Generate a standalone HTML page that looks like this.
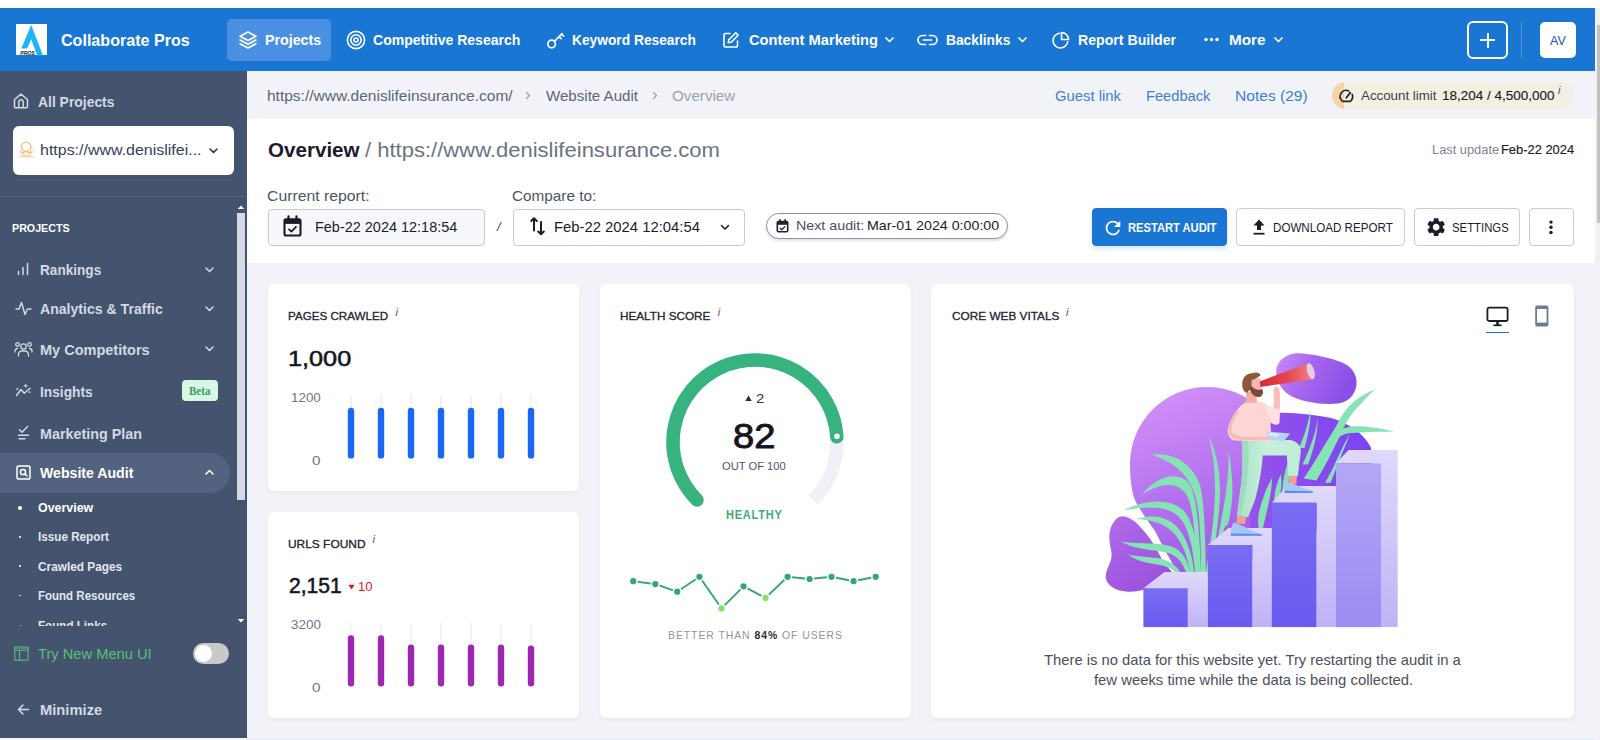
<!DOCTYPE html>
<html lang="en"><head><meta charset="utf-8"><title>Website Audit Overview</title>
<style>
*{box-sizing:border-box;margin:0;padding:0}
html,body{width:1600px;height:740px;overflow:hidden;background:#fff;font-family:"Liberation Sans",sans-serif}
body{position:relative}
.t,.t2{position:absolute;white-space:nowrap;transform-origin:0 50%;display:block}
.a{position:absolute;display:block}
svg{position:absolute;overflow:visible}
.card{position:absolute;background:#fff;border-radius:6px;box-shadow:0 2px 4px rgba(50,60,110,.055)}
.btn{position:absolute;top:208px;height:38px;border-radius:4px;border:1px solid #c6cadc;background:#fff}

</style></head>
<body>
<!-- ===== backgrounds ===== -->
<div class="a" style="left:0;top:8px;width:1595px;height:63px;background:#1976d2"></div>
<div class="a" style="left:247px;top:71px;width:1348px;height:48px;background:#f2f3f8"></div>
<div class="a" style="left:247px;top:119px;width:1348px;height:144px;background:#fff"></div>
<div class="a" style="left:247px;top:263px;width:1348px;height:477px;background:#f2f3f8"></div>
<div class="a" style="left:0;top:71px;width:247px;height:669px;background:#44546f"></div>
<div class="a" style="left:0;top:737.600px;width:1595px;height:2.400px;background:#f6f8fc"></div><div class="a" style="left:247px;top:739px;width:1348px;height:1px;background:#dfe6f3"></div>
<!-- page scrollbar -->
<div class="a" style="left:1595px;top:8px;width:5px;height:732px;background:#f1f2f7"></div>
<div class="a" style="left:1597px;top:25px;width:3px;height:197.500px;background:#c1c1c1"></div>

<!-- ===== top nav ===== -->
<div class="a" style="left:16px;top:24px;width:31px;height:31.400px;background:#fff"></div>
<svg style="left:16px;top:24px" width="31" height="31.400" viewBox="0 0 31 31.400">
  <path d="M15.200 1.100 L27 31.400 L21.200 31.400 L15.200 15.300 L11.100 24.400 L5.300 24.400 Z" fill="#1cb5f5"/>
  <text x="4.200" y="31.100" font-family="Liberation Sans, sans-serif" font-size="5.600" font-weight="700" font-style="italic" fill="#1a1a1a" textLength="14.600" lengthAdjust="spacingAndGlyphs">PROS</text>
</svg>
<div class="a" style="left:227px;top:19px;width:104px;height:42px;border-radius:5px;background:#4a90e2"></div>
<!-- projects (layers) icon -->
<svg style="left:238px;top:30px" width="20" height="20" viewBox="0 0 24 24" fill="none" stroke="#fff" stroke-width="2" stroke-linecap="round" stroke-linejoin="round">
  <path d="M12 2.5 L21.5 7.5 L12 12.5 L2.500 7.5 Z"/><path d="M2.5 12 L12 17 L21.5 12"/><path d="M2.5 16.5 L12 21.500 L21.5 16.5"/>
</svg>
<!-- competitive (target) icon -->
<svg style="left:346px;top:30px" width="20" height="20" viewBox="0 0 20 20" fill="none" stroke="#fff" stroke-width="1.6">
  <circle cx="10" cy="10" r="8.600"/><circle cx="10" cy="10" r="5.2"/><circle cx="10" cy="10" r="2"/>
</svg>
<!-- key icon -->
<svg style="left:546px;top:31px" width="19" height="19" viewBox="0 0 19 19" fill="none" stroke="#fff" stroke-width="1.7" stroke-linecap="round" stroke-linejoin="round">
  <circle cx="5.600" cy="13" r="3.800"/><path d="M8.400 10.300 L16 2.700 M13 5.700 L15 7.700 M15.600 3.100 L17.600 5.100"/>
</svg>
<!-- edit icon -->
<svg style="left:722px;top:31px" width="18" height="18" viewBox="0 0 18 18" fill="none" stroke="#fff" stroke-width="1.6" stroke-linecap="round" stroke-linejoin="round">
  <path d="M8 2.500 H3.500 A1.5 1.5 0 0 0 2 4 V14.500 A1.5 1.5 0 0 0 3.500 16 H14 A1.5 1.500 0 0 0 15.500 14.500 V10"/>
  <path d="M13.800 1.800 L16.200 4.200 L9.200 11.200 L6.300 11.700 L6.800 8.800 Z"/>
</svg>
<svg style="left:885px;top:37px" width="9" height="6" viewBox="0 0 9 6" fill="none" stroke="#fff" stroke-width="1.7" stroke-linecap="round" stroke-linejoin="round"><path d="M1 1 L4.500 4.500 L8 1"/></svg>
<!-- link icon -->
<svg style="left:917px;top:34px" width="21" height="12" viewBox="0 0 21 12" fill="none" stroke="#fff" stroke-width="1.700" stroke-linecap="round" stroke-linejoin="round">
  <path d="M8.5 1.500 H5.500 A4.500 4.500 0 0 0 5.500 10.500 H8.500"/><path d="M12.5 1.500 H15.500 A4.500 4.500 0 0 1 15.500 10.500 H12.500"/><path d="M6.500 6 H14.500"/>
</svg>
<svg style="left:1018px;top:37px" width="9" height="6" viewBox="0 0 9 6" fill="none" stroke="#fff" stroke-width="1.7" stroke-linecap="round" stroke-linejoin="round"><path d="M1 1 L4.500 4.500 L8 1"/></svg>
<!-- pie icon -->
<svg style="left:1051px;top:31px" width="19" height="19" viewBox="0 0 19 19" fill="none" stroke="#fff" stroke-width="1.6" stroke-linecap="round" stroke-linejoin="round">
  <path d="M8.500 2.200 A7.4 7.400 0 1 0 16.800 10.500"/><path d="M10.500 1.500 V8.500 H17.500 A7 7 0 0 0 10.500 1.500 Z"/>
</svg>
<svg style="left:1204px;top:37px" width="15" height="5" viewBox="0 0 15 5" fill="#fff"><circle cx="2" cy="2.500" r="1.700"/><circle cx="7.500" cy="2.500" r="1.700"/><circle cx="13" cy="2.500" r="1.700"/></svg>
<svg style="left:1274px;top:37px" width="9" height="6" viewBox="0 0 9 6" fill="none" stroke="#fff" stroke-width="1.7" stroke-linecap="round" stroke-linejoin="round"><path d="M1 1 L4.500 4.500 L8 1"/></svg>
<div class="a" style="left:1467px;top:21px;width:41px;height:38px;border:2px solid #fff;border-radius:6px"></div>
<div class="a" style="left:1480px;top:39px;width:15px;height:2px;background:#fff"></div>
<div class="a" style="left:1486.500px;top:32.500px;width:2px;height:15px;background:#fff"></div>
<div class="a" style="left:1521px;top:22px;width:1px;height:36px;background:#4f93dd"></div>
<div class="a" style="left:1540px;top:22px;width:36px;height:36px;border-radius:5px;background:#fff"></div>

<!-- ===== breadcrumb row ===== -->
<svg style="left:525px;top:91px" width="6" height="9" viewBox="0 0 6 9" fill="none" stroke="#9aa1ae" stroke-width="1.3" stroke-linecap="round" stroke-linejoin="round"><path d="M1.500 1.500 L4.500 4.500 L1.500 7.500"/></svg>
<svg style="left:652px;top:91px" width="6" height="9" viewBox="0 0 6 9" fill="none" stroke="#9aa1ae" stroke-width="1.3" stroke-linecap="round" stroke-linejoin="round"><path d="M1.500 1.500 L4.500 4.500 L1.500 7.500"/></svg>
<div class="a" style="left:1332px;top:82.300px;width:242px;height:26.800px;border-radius:13.400px;background:#f5efe1;overflow:hidden"><div style="width:12px;height:27px;background:#f6d5a4"></div></div>
<svg style="left:1339px;top:89px" width="15" height="14" viewBox="0 0 15 14" fill="none" stroke="#1f2230" stroke-width="1.600" stroke-linecap="round" stroke-linejoin="round">
  <path d="M9.800 2 A6 6 0 0 0 2.600 11.300 Q3 12.400 4 12.400 H11 Q12 12.400 12.400 11.300 A6 6 0 0 0 13.200 5.300"/><path d="M7.300 8.800 L11.300 3.600" stroke-width="1.800"/>
</svg>

<!-- ===== header controls ===== -->
<div class="a" style="left:268px;top:209px;width:217px;height:36.500px;border:1px solid #c6cadc;border-radius:4px;background:#f6f7fb"></div>
<svg style="left:283px;top:215px" width="19" height="22" viewBox="0 0 19 22" fill="none" stroke="#1b1b29" stroke-width="2.100" stroke-linejoin="round" stroke-linecap="round">
  <rect x="1.500" y="4.200" width="16" height="16.300" rx="1.500"/><path d="M1.500 6.800 H17.500" stroke-width="4.200" stroke-linecap="butt"/><path d="M5.500 1.300 V5 M13.500 1.300 V5" stroke-width="2.200"/><path d="M6 14.300 L8.400 16.700 L13 11.800" stroke-width="1.700"/>
</svg>
<div class="a" style="left:512.500px;top:209px;width:232px;height:36.500px;border:1px solid #c6cadc;border-radius:4px;background:#fff"></div>
<svg style="left:530px;top:216px" width="15" height="20" viewBox="0 0 15 20" fill="none" stroke="#1b1b29" stroke-width="2" stroke-linecap="round" stroke-linejoin="round">
  <path d="M4 14.500 V2.200 M1.200 5 L4 2.200 L6.800 5"/><path d="M11 6 V18.300 M8.200 15.500 L11 18.300 L13.800 15.500"/>
</svg>
<svg style="left:720px;top:224px" width="10" height="7" viewBox="0 0 10 7" fill="none" stroke="#1b1b29" stroke-width="1.600" stroke-linecap="round" stroke-linejoin="round"><path d="M1.500 1.500 L5 5 L8.500 1.500"/></svg>
<div class="a" style="left:766px;top:212.500px;width:242px;height:26.500px;border:1px solid #8d93a3;border-radius:13.500px;background:#fff;box-shadow:0 2px 3px rgba(0,0,0,.12)"></div>
<svg style="left:776px;top:218.500px" width="13" height="14" viewBox="0 0 13 14" fill="none" stroke="#1f2230" stroke-width="1.600" stroke-linejoin="round" stroke-linecap="round">
  <rect x="1.300" y="2.600" width="10.400" height="10.200" rx="1.200"/><path d="M1.300 4.300 H11.700" stroke-width="3" stroke-linecap="butt"/><path d="M3.900 0.900 V3 M9.100 0.900 V3" stroke-width="1.700"/><path d="M4.200 9.200 L5.800 10.700 L8.800 7.600" stroke-width="1.300"/>
</svg>
<div class="btn" style="left:1092px;width:135px;background:#1976d2;border-color:#1976d2;box-shadow:0 3px 5px rgba(25,118,210,.18)"></div>
<svg style="left:1101.500px;top:216.800px" width="22" height="22" viewBox="0 0 24 24" fill="#fff"><path d="M17.650 6.350 A7.950 7.950 0 0 0 12 4 a8 8 0 1 0 7.730 10 h-2.080 A6 6 0 1 1 12 6 c1.660 0 3.140 .69 4.220 1.780 L13 11 h7 V4 z"/></svg>
<div class="btn" style="left:1236px;width:169px"></div>
<svg style="left:1252px;top:219px" width="14" height="16" viewBox="0 0 14 16" fill="#1b1b29"><path d="M7 0.500 L12.500 6.500 H9 V11 H5 V6.500 H1.500 Z"/><rect x="1.500" y="13.800" width="11" height="1.800"/></svg>
<div class="btn" style="left:1414px;width:106px"></div>
<svg style="left:1425.400px;top:216.100px" width="22.300" height="22.300" viewBox="0 0 24 24" fill="#1b1b29"><path d="M19.140 12.940c.04-.3.060-.61.060-.94 0-.32-.02-.64-.07-.94l2.030-1.580a.49.490 0 0 0 .12-.61l-1.920-3.320a.488.488 0 0 0-.59-.22l-2.390.96c-.5-.38-1.030-.7-1.620-.94l-.36-2.540a.484.484 0 0 0-.48-.41h-3.840c-.24 0-.43.170-.47.410l-.36 2.540c-.59.240-1.130.57-1.620.94l-2.390-.96c-.22-.08-.47 0-.59.220L2.740 8.870c-.12.210-.08.470.12.610l2.030 1.580c-.05.300-.09.630-.09.940s.02.640.07.940l-2.030 1.580a.49.490 0 0 0-.12.610l1.920 3.320c.12.220.37.290.59.220l2.390-.96c.5.380 1.030.7 1.620.94l.36 2.540c.05.240.24.410.48.410h3.840c.24 0 .44-.17.470-.41l.36-2.540c.59-.24 1.130-.56 1.620-.94l2.390.96c.22.080.47 0 .59-.22l1.920-3.320c.12-.22.070-.47-.12-.61l-2.010-1.580zM12 15.600c-1.980 0-3.600-1.620-3.600-3.600s1.620-3.600 3.600-3.600 3.600 1.620 3.600 3.600-1.620 3.600-3.600 3.600z"/></svg>
<div class="btn" style="left:1529px;width:45px"></div>
<svg style="left:1549px;top:220px" width="4" height="15" viewBox="0 0 4 15" fill="#1b1b29"><circle cx="2" cy="2.100" r="1.700"/><circle cx="2" cy="7.300" r="1.700"/><circle cx="2" cy="12.500" r="1.700"/></svg>

<!-- ===== cards ===== -->
<div class="card" style="left:268px;top:284px;width:311px;height:206.500px"></div>
<div class="card" style="left:268px;top:511.500px;width:311px;height:206px"></div>
<div class="card" style="left:599.500px;top:284px;width:311px;height:433.500px"></div>
<div class="card" style="left:931px;top:284px;width:643px;height:433.500px"></div>

<!-- pages crawled bars -->
<svg style="left:340px;top:390px" width="200" height="75" viewBox="340 390 200 75">
  <g stroke="#e6e8ef" stroke-width="1"><path d="M351 395V410M381 395V410M411 395V410M441 395V410M471 395V410M501 395V410M531 395V410"/></g>
  <g stroke="#1a66f5" stroke-width="6.400" stroke-linecap="round"><path d="M351 411V455.400M381 411V455.400M411 411V455.400M441 411V455.400M471 411V455.400M501 411V455.400M531 411V455.400"/></g>
</svg>
<!-- urls found bars -->
<svg style="left:340px;top:618px" width="200" height="75" viewBox="340 618 200 75">
  <g stroke="#e6e8ef" stroke-width="1"><path d="M351 623V640M381 623V640M411 623V648M441 623V648M471 623V648M501 623V648M531 623V648"/></g>
  <g stroke="#9c27b0" stroke-width="6.400" stroke-linecap="round"><path d="M351 638.500V683.300M381 638.500V683.300M411 647.700V683.300M441 647.700V683.300M471 647.700V683.300M501 647.700V683.300M531 648.600V683.300"/></g>
</svg>
<svg style="left:348px;top:583.500px" width="7" height="6" viewBox="0 0 7 6" fill="#e0182d"><path d="M0.300 0.800 H6.700 L3.500 5.500 Z"/></svg>

<!-- health gauge -->
<svg style="left:660px;top:348px" width="190" height="170" viewBox="660 348 190 170" fill="none">
  <path d="M697.020 499.980 A82 82 0 1 1 812.980 499.980" stroke="#f0f1f6" stroke-width="13.500"/>
  <path d="M697.020 499.980 A82 82 0 1 1 836.840 436.850" stroke="#36b37e" stroke-width="13.500" stroke-linecap="round"/>
  <circle cx="837" cy="436.200" r="2.800" fill="#fff"/>
  <path d="M745.300 401 H751.700 L748.500 395.500 Z" fill="#2a2d3a"/>
</svg>
<!-- sparkline -->
<svg style="left:625px;top:570px" width="260" height="45" viewBox="625 570 260 45" fill="none">
  <polyline points="633.200,581.200 655.300,584.100 677.200,591.700 699.400,576.800 721.500,608.400 743.600,586.300 765.500,597.900 787.600,576.800 809.600,579 831.500,576.800 853.600,581.200 875.700,576.800" stroke="#2fa874" stroke-width="1.900"/>
  <g fill="#2fa874" stroke="#fff" stroke-width="1.600">
    <circle cx="633.200" cy="581.200" r="3.900"/><circle cx="655.300" cy="584.100" r="3.900"/><circle cx="677.200" cy="591.700" r="3.900"/><circle cx="699.400" cy="576.800" r="3.900"/>
    <circle cx="721.500" cy="608.400" r="3.900" fill="#86e05a"/><circle cx="743.600" cy="586.300" r="3.900"/><circle cx="765.500" cy="597.900" r="3.900" fill="#86e05a"/>
    <circle cx="787.600" cy="576.800" r="3.900"/><circle cx="809.600" cy="579" r="3.900"/><circle cx="831.500" cy="576.800" r="3.900"/><circle cx="853.600" cy="581.200" r="3.900"/><circle cx="875.700" cy="576.800" r="3.900"/>
  </g>
</svg>

<!-- core web vitals icons -->
<svg style="left:1486px;top:305.500px" width="23" height="21" viewBox="0 0 23 21" fill="none" stroke="#1b1b29" stroke-width="1.800" stroke-linejoin="round">
  <rect x="1.400" y="1.600" width="20.200" height="13.400" rx="1.800"/><path d="M11.500 15 V19" stroke-width="2.600"/><path d="M7.400 19.300 H15.600" stroke-width="1.700"/>
</svg>
<div class="a" style="left:1486px;top:331.900px;width:23px;height:1.500px;background:#1976d2"></div>
<svg style="left:1535px;top:305px" width="14" height="22" viewBox="0 0 14 22"><rect x="0.200" y="0.400" width="13.200" height="21.200" rx="2.200" fill="#6d7b92"/><rect x="2" y="4" width="9.600" height="13.600" fill="#fff"/></svg>
<svg style="left:1100px;top:345px" width="310" height="290" viewBox="1100 345 310 290">
  <defs>
    <linearGradient id="gC" x1="0" y1="0" x2="0.350" y2="1"><stop offset="0" stop-color="#d694fb"/><stop offset=".45" stop-color="#bd7bf2"/><stop offset="1" stop-color="#a05be6"/></linearGradient>
    <linearGradient id="gB3" x1="0" y1="0" x2="1" y2="0.300"><stop offset="0" stop-color="#cb8df8"/><stop offset=".45" stop-color="#a867ef"/><stop offset="1" stop-color="#8a4fe8"/></linearGradient>
    <linearGradient id="gB2" x1="0" y1="0" x2="0.600" y2="1"><stop offset="0" stop-color="#b36ce8"/><stop offset="1" stop-color="#9a52de"/></linearGradient>
    <linearGradient id="gH" x1="0" y1="0" x2="1" y2="0"><stop offset="0" stop-color="#9652ea"/><stop offset="1" stop-color="#7a44f2"/></linearGradient>
    <linearGradient id="gF" x1="0" y1="0" x2="0" y2="1"><stop offset="0" stop-color="#7a6cf2"/><stop offset="1" stop-color="#695bee"/></linearGradient>
    <linearGradient id="gF4" x1="0" y1="0" x2="0" y2="1"><stop offset="0" stop-color="#b3a7f7"/><stop offset="1" stop-color="#9a8cf2"/></linearGradient>
    <linearGradient id="gS" x1="0" y1="0" x2="0" y2="1"><stop offset="0" stop-color="#e0d9fc"/><stop offset="1" stop-color="#beb3f6"/></linearGradient>
    <linearGradient id="gT" x1="0" y1="0" x2="1" y2="0"><stop offset="0" stop-color="#d62a36"/><stop offset=".5" stop-color="#e4454e"/><stop offset="1" stop-color="#f28289"/></linearGradient>
    <linearGradient id="gP" x1="0" y1="0" x2="1" y2="0"><stop offset="0" stop-color="#a9e3c7"/><stop offset=".5" stop-color="#c9f0dd"/><stop offset="1" stop-color="#bdecd5"/></linearGradient>
  </defs>
  <!-- blobs -->
  <path d="M1130 464 A77 77 0 0 1 1284 464 C1284 500 1270 540 1240 575 L1180 575 C1176 570 1166.600 554 1155 531 C1147 520 1138 507 1134.500 499 C1131.500 490 1130 478 1130 464 Z" fill="url(#gC)"/>
  <path d="M1122.500 516.300 C1129 516.800 1135 521 1139.800 526.500 C1145 532 1149 537 1152.700 542.700 C1157 549 1160 556 1163.600 562.200 L1172 572 L1146 589 C1138 592 1124 593 1116 589.300 C1107 585 1104.500 579 1106.200 573 C1108 566 1112 561 1111.600 553.600 C1111 547 1108.500 541 1109.500 534 C1110 529 1111.500 525 1113.800 522.200 C1116 518.500 1119 516.200 1122.500 516.300 Z" fill="url(#gB2)"/>
  <path d="M1276.500 368 C1279 358.500 1289 352.800 1299 353.300 C1314 354.500 1330 357.500 1342 362.500 C1352 366.500 1357.500 375 1356.500 385 C1355 395.500 1348 402 1338 403.500 C1322 405 1305 402.500 1292 396.500 C1282 391.500 1274.500 380 1276.500 368 Z" fill="url(#gB3)"/>
  <path d="M1262 414 C1270 412 1300 412 1330 417.800 C1350 423 1366 436 1371 448 L1372 470 L1340 470 L1340 530 L1250 530 L1250 420 Z" fill="url(#gH)"/>
  <!-- plants left -->
  <g fill="#86e3b4">
    <path d="M1150.500 454.500 C1172 452 1192 462 1200 485 C1204 500 1205 530 1206 572 L1201 572 C1201 540 1200 512 1195 495 C1188 472 1170 460 1150.500 454.500 Z"/>
    <path d="M1141.500 495 C1155 478 1176 470 1188 482 C1196 492 1199 520 1201 572 L1196.500 572 C1195 530 1193 505 1186 494 C1176 480 1158 484 1141.500 495 Z"/>
    <path d="M1208.500 436 C1218 455 1222 480 1219 510 C1217 535 1213 555 1211 572 L1206 572 C1209 550 1213 530 1214.500 505 C1216 480 1214 455 1208.500 436 Z"/>
    <path d="M1228.500 452 C1233 470 1232 490 1228 510 C1224 530 1219 550 1217 572 L1213 572 C1215 550 1220 528 1223.500 508 C1227 488 1229 470 1228.500 452 Z"/>
    <path d="M1123.500 510.500 C1145 499 1170 498 1183 510 C1194 522 1198 545 1199 572 L1195 572 C1193 548 1189 528 1179 517 C1167 505 1146 506 1123.500 510.500 Z"/>
    <path d="M1135.500 519 C1155 513 1173 517 1183 535 C1190 548 1193 560 1194 572 L1190 572 C1188 560 1185 550 1179 540 C1170 525 1155 520 1135.500 519 Z"/>
    <path d="M1120.500 541.500 C1140 545 1160 541 1175 548 C1184 553 1188 562 1190 572 L1186 572 C1183 564 1179 558 1172 554.500 C1160 549 1140 552 1120.500 541.500 Z"/>
    <path d="M1128 554.500 C1142 558 1157 556 1168 561 C1174 564 1178 568 1180 572 L1175 572 C1171 568 1166 566 1160 565 C1148 563 1138 562 1128 554.500 Z"/>
    <path d="M1231 470 C1234 490 1232 508 1228 524 L1224 528 C1228 510 1231 490 1231 470 Z"/>
    <path d="M1259 512 C1262 500 1266 488 1272 478 C1272 492 1268 506 1263 528 L1258.500 528 C1258 522 1258 517 1259 512 Z"/>
    <path d="M1274 500 C1275 490 1277 482 1281 474 C1282 484 1281 492 1279 500 Z"/>
    <path d="M1282 492 C1283 480 1285 470 1288 462 L1289 480 C1288 486 1286 490 1285 494 Z"/>
  </g>
  <!-- plants right -->
  <g fill="#86e3b4">
    <path d="M1375 389.300 C1369 392 1364 394.500 1359.800 397.300 C1353 402 1348 407 1344.700 411.400 C1341 416.500 1338.500 421.500 1336 426.500 L1325.200 443.900 L1312.200 465.500 L1303.600 478.500 L1316.500 480.600 L1327.400 461.200 L1340.300 435.200 C1343 429 1345.500 424 1347.900 420 C1352 413 1357 407.500 1362 402.700 C1366 398 1370 394 1375 389.300 Z"/>
    <path d="M1394.400 431.500 C1386 429.500 1378 428 1370.600 427.200 C1363 426.200 1357 426 1351.200 426.500 C1346 427.300 1342 428.800 1338.200 430.900 L1331 442 L1331.700 446 C1334 442.500 1336 439.500 1338.200 437.400 C1342 434.800 1346 433.500 1351.200 433 C1357 432.500 1363 432.300 1370.600 432 C1378 431.800 1386 431.700 1394.400 431.500 Z"/>
    <path d="M1350 434 C1344 444 1338 456 1333 468 L1325 482.800 L1330.600 482.800 C1334 474 1338 464 1342 454 C1345 446 1348 440 1350 434 Z"/>
    <path d="M1310.500 409.200 C1311 420 1309 432 1304.600 448 L1299 448 C1305 434 1309 421 1310.500 409.200 Z"/>
    <path d="M1317.600 418.300 C1318 432 1314 449 1308 464.400 L1302.500 464.400 C1310 449 1316 433 1317.600 418.300 Z"/>
  </g>
  <!-- bars -->
  <g>
    <path d="M1143.400 588.200 L1164.600 572 L1207.900 572 L1207.900 627.100 L1187.800 627.100 L1187.800 588.200 Z" fill="url(#gS)"/>
    <rect x="1143.400" y="588.200" width="44.400" height="38.900" fill="url(#gF)"/>
    <path d="M1207.900 545 L1228.500 528 L1272.200 528 L1272.200 627.100 L1252.300 627.100 L1252.300 545 Z" fill="url(#gS)"/>
    <rect x="1207.900" y="545" width="44.400" height="82.100" fill="url(#gF)"/>
    <path d="M1271.800 502.700 L1287 486 L1336 486 L1336 627.100 L1316.500 627.100 L1316.500 502.700 Z" fill="url(#gS)"/>
    <rect x="1271.800" y="502.700" width="44.700" height="124.400" fill="url(#gF)"/>
    <path d="M1336 463.300 L1348.500 450 L1397.700 450 L1397.700 627.100 L1381 627.100 L1381 463.300 Z" fill="url(#gS)"/>
    <rect x="1336" y="463.300" width="45" height="163.800" fill="url(#gF4)"/>
  </g>
  <!-- person -->
  <g>
    <!-- pants -->
    <path d="M1241.800 440 L1290 440 C1297 441 1301.500 446 1300.800 452 L1297.700 476.600 L1288.400 476.600 L1286.800 455.600 L1262.700 455.600 C1262 470 1258 490 1255 500 L1248 517 L1237 516.200 C1239 500 1242 480 1242.500 468.800 Z" fill="url(#gP)"/>
    <path d="M1241.800 440 L1248 440 C1250 460 1247 485 1244 500 L1241 516.500 L1237 516.200 C1239 500 1242 480 1242.500 468.800 Z" fill="#9fdcbf"/>
    <!-- ankles -->
    <path d="M1289 476.600 L1296.900 476.600 L1296.300 484 L1289.500 484 Z" fill="#f5a08e"/>
    <path d="M1237 516.200 L1246 517 L1245 524 L1236.500 523.500 Z" fill="#f5a08e"/>
    <!-- shoes -->
    <path d="M1286.500 482 C1291 482.500 1297 485.500 1304 488.500 C1310 490 1313 491 1313.200 493 L1284.500 493 C1284 489 1284.700 485 1286.500 482 Z" fill="#a9c7f4"/>
    <path d="M1284.500 490.800 L1312.500 491.300 L1313.200 493 L1284.500 493 Z" fill="#5b8def"/>
    <path d="M1233.500 522.400 C1238 523.500 1246 527 1253 531 C1258 533 1262 534 1262 535.700 L1230.900 535.700 C1230.500 531 1231.200 526 1233.500 522.400 Z" fill="#a9c7f4"/>
    <path d="M1230.900 533.500 L1261 534 L1262 535.700 L1230.900 535.700 Z" fill="#5b8def"/>
    <!-- torso -->
    <path d="M1245.700 402.300 C1238 406 1231 418 1228 428 C1227 434 1229 438.500 1234 440.500 L1272 441.500 L1270.500 425 C1272 418 1268.500 408 1266 403.600 C1260 401 1252 400.500 1245.700 402.300 Z" fill="#fcd6d6"/>
    <path d="M1237 412 C1231.500 420 1229 428 1230.500 433 C1233 438 1240 438.800 1250 438.500 L1271 438.300" fill="none" stroke="#f8bab3" stroke-width="3" stroke-linecap="round"/>
    <!-- sleeve + forearm -->
    <path d="M1264 404 L1273.500 407.500 L1280 409.500 L1279.500 423 C1277 426 1273 425 1270.500 422 C1269 416 1267 410 1264 404 Z" fill="#fde1e1"/>
    <path d="M1273.600 408 L1280 409.600 L1280 392 C1279.500 388 1277.500 386.300 1275.500 386.800 C1273.500 387.500 1273.300 390 1273.800 393 Z" fill="#fbbdbd"/>
    <!-- laptop -->
    <path d="M1266 431.400 L1290.300 433.400 L1283.500 441.500 L1270 439.500 Z" fill="#b5d3f5"/>
    <path d="M1268 432.500 L1280 434 L1277 437 L1270.500 436 Z" fill="#e1ecfb"/>
    <!-- neck, face -->
    <path d="M1246.400 392 L1256.500 392 L1256.800 402.800 L1245.800 402.800 Z" fill="#f6aaa0"/>
    <path d="M1251.500 379 L1260.500 378.300 L1261.200 388.500 L1256 391.500 L1251.500 389.500 Z" fill="#f9b4b4"/>
    <!-- hair, beard -->
    <path d="M1242.300 386 C1241.500 378 1246 373 1252.400 373.200 C1256 371.800 1260 372.800 1260.500 375.300 C1258 378 1254 379.500 1251.800 380 L1251.500 388 L1247 393 C1244 392 1242.800 389.500 1242.300 386 Z" fill="#8b5a3c"/>
    <path d="M1249.200 386.800 L1252 386.500 C1254 389.500 1258 390.500 1262 389 C1264 392 1263 396 1259.500 397 C1254 397.500 1250 393 1249.200 386.800 Z" fill="#7a4a30"/>
    <!-- telescope -->
    <path d="M1259.900 381.400 L1308.500 363.100 C1311 364 1314 375 1313.200 379.300 L1260.500 386.900 Z" fill="url(#gT)"/>
    <ellipse cx="1310.800" cy="371.200" rx="3.500" ry="8.300" transform="rotate(-16 1310.800 371.200)" fill="#e9cde0"/>
  </g>
</svg>


<!-- ===== sidebar ===== -->
<svg style="left:13px;top:93px" width="16" height="16" viewBox="0 0 16 16" fill="none" stroke="#d3d8e2" stroke-width="1.500" stroke-linejoin="round" stroke-linecap="round">
  <path d="M1.500 6.500 L8 1.200 L14.500 6.500 V13.500 A1.200 1.200 0 0 1 13.300 14.700 H2.700 A1.200 1.200 0 0 1 1.500 13.500 Z"/><path d="M5.800 14.500 V9 A2.200 2.200 0 0 1 10.200 9 V14.500"/>
</svg>
<div class="a" style="left:13px;top:126px;width:221px;height:48.500px;border-radius:6px;background:#fff"></div>
<svg style="left:18px;top:141px" width="16" height="18" viewBox="18 141 16 18" fill="none" stroke="#f2bf78" stroke-width="1.400" stroke-linecap="round">
  <circle cx="26.200" cy="146.800" r="4.700"/>
  <path d="M20.500 151.200 C21 153.200 23.500 153.600 24.600 152 M31.900 151.200 C31.400 153.200 28.900 153.600 27.800 152" stroke-width="1.500"/>
  <path d="M19 156.800 H33 M21.500 155.300 H30.500" stroke="#f6d3a0" stroke-width="1.300"/>
</svg>
<svg style="left:209px;top:147.500px" width="9" height="6" viewBox="0 0 9 6" fill="none" stroke="#2a2d3a" stroke-width="1.500" stroke-linecap="round" stroke-linejoin="round"><path d="M1 1 L4.500 4.500 L8 1"/></svg>
<div class="a" style="left:16px;top:179.500px;width:215px;height:0;border-top:1px dotted #53627d"></div>
<div class="a" style="left:0;top:196px;width:247px;height:1px;background:#56657f"></div>
<!-- sidebar scrollbar -->
<div class="a" style="left:237px;top:212.500px;width:8px;height:287.500px;background:#d6d8e6"></div>
<svg style="left:237px;top:205px" width="8" height="4" viewBox="0 0 8 4" fill="#fff"><path d="M0.800 4 L4 0.500 L7.200 4 Z"/></svg>
<svg style="left:237px;top:619px" width="8" height="4" viewBox="0 0 8 4" fill="#fff"><path d="M0.800 0 L4 3.500 L7.200 0 Z"/></svg>

<!-- menu icons -->
<svg style="left:17px;top:262px" width="13" height="14" viewBox="0 0 13 14" fill="none" stroke="#d3d8e2" stroke-width="1.500" stroke-linecap="round"><path d="M1.500 12.500 V9.500 M6 12.500 V5.500 M10.500 12.500 V1.500"/></svg>
<svg style="left:15px;top:301px" width="17" height="15" viewBox="0 0 17 15" fill="none" stroke="#d3d8e2" stroke-width="1.500" stroke-linecap="round" stroke-linejoin="round"><path d="M1 8 H4 L6.500 1.500 L10 13.500 L12.500 8 H16"/></svg>
<svg style="left:14px;top:341px" width="19" height="16" viewBox="0 0 19 16" fill="none" stroke="#d3d8e2" stroke-width="1.300" stroke-linecap="round" stroke-linejoin="round">
  <circle cx="9.500" cy="5.500" r="2.700"/><path d="M4.500 15 V13.500 A3.500 3.500 0 0 1 8 10 H11 A3.500 3.500 0 0 1 14.500 13.500 V15"/>
  <circle cx="3.500" cy="3.500" r="1.800"/><circle cx="15.500" cy="3.500" r="1.800"/><path d="M1 11 V10 A2.500 2.500 0 0 1 3.500 7.500 M18 11 V10 A2.500 2.500 0 0 0 15.500 7.500"/>
</svg>
<svg style="left:15px;top:383px" width="17" height="15" viewBox="0 0 17 15" fill="none" stroke="#d3d8e2" stroke-width="1.500" stroke-linecap="round" stroke-linejoin="round"><path d="M1.500 12.500 L6 6.500 L9.300 10.200 L15 5.300"/><path d="M10.700 1.300 V4.300 M9.200 2.800 H12.200" stroke-width="1.100"/><path d="M2.300 5.300 V6.700 M1.600 6 H3 M14.500 8.600 V9.800 M13.900 9.200 H15.100" stroke-width="0.900"/></svg>
<svg style="left:17px;top:425px" width="14" height="16" viewBox="0 0 14 16" fill="none" stroke="#d3d8e2" stroke-width="1.500" stroke-linecap="round" stroke-linejoin="round"><path d="M2.500 4.800 L5 7.300 L10.500 1.500"/><path d="M1.500 10.300 H11.500 M2 13.700 H8"/></svg>
<div class="a" style="left:0;top:452.500px;width:230px;height:40px;border-radius:0 20px 20px 0;background:#53637f"></div>
<svg style="left:16px;top:465px" width="15" height="15" viewBox="0 0 15 15" fill="none" stroke="#fff" stroke-width="1.500" stroke-linecap="round" stroke-linejoin="round"><rect x="1" y="1" width="13" height="13" rx="1.800"/><circle cx="7" cy="7" r="2.600"/><path d="M9 9 L11 11"/></svg>
<svg style="left:204.500px;top:266.500px" width="9" height="6" viewBox="0 0 9 6" fill="none" stroke="#d3d8e2" stroke-width="1.500" stroke-linecap="round" stroke-linejoin="round"><path d="M1 1 L4.500 4.500 L8 1"/></svg>
<svg style="left:204.500px;top:305.500px" width="9" height="6" viewBox="0 0 9 6" fill="none" stroke="#d3d8e2" stroke-width="1.500" stroke-linecap="round" stroke-linejoin="round"><path d="M1 1 L4.500 4.500 L8 1"/></svg>
<svg style="left:204.500px;top:346px" width="9" height="6" viewBox="0 0 9 6" fill="none" stroke="#d3d8e2" stroke-width="1.500" stroke-linecap="round" stroke-linejoin="round"><path d="M1 1 L4.500 4.500 L8 1"/></svg>
<svg style="left:204.500px;top:469px" width="9" height="6" viewBox="0 0 9 6" fill="none" stroke="#fff" stroke-width="1.600" stroke-linecap="round" stroke-linejoin="round"><path d="M1 5 L4.500 1.500 L8 5"/></svg>
<div class="a" style="left:182px;top:380px;width:36px;height:21px;border-radius:4px;background:#d9f6e5"></div>
<!-- submenu bullets -->
<div class="a" style="left:18px;top:506px;width:4px;height:4px;border-radius:2px;background:#fff"></div>
<div class="a" style="left:19.300px;top:535.900px;width:1.700px;height:1.700px;background:#d5dae4"></div>
<div class="a" style="left:19.300px;top:565.300px;width:1.700px;height:1.700px;background:#d5dae4"></div>
<div class="a" style="left:19.300px;top:594.700px;width:1.700px;height:1.700px;background:#d5dae4"></div>
<div class="a" style="left:0;top:615px;width:236px;height:11px;overflow:hidden">
  <span class="t2" style="left:38.300px;top:2px;font-size:12.500px;line-height:18px;font-weight:700;color:#e3e6ee;transform:scaleX(.93)">Found Links</span>
  <div class="a" style="left:19.500px;top:10px;width:1.500px;height:1.500px;background:#c5cbd8"></div>
</div>
<!-- try new menu -->
<svg style="left:14px;top:646px" width="15" height="15" viewBox="0 0 15 15" fill="none" stroke="#58bf78" stroke-width="1.100" stroke-linejoin="miter"><rect x="0.800" y="1" width="13.200" height="13.200"/><path d="M0.800 4.200 H14 M5.600 4.200 V14.200"/><path d="M0.800 2.400 H14" stroke-width="0.800" opacity=".8"/></svg>
<div class="a" style="left:192.500px;top:642.500px;width:36.500px;height:21px;border-radius:10.500px;background:#c9c9c9"></div>
<div class="a" style="left:194.500px;top:644.500px;width:17px;height:17px;border-radius:8.500px;background:#fff"></div>
<svg style="left:17px;top:703px" width="13" height="13" viewBox="0 0 13 13" fill="none" stroke="#d3d8e2" stroke-width="1.500" stroke-linecap="round" stroke-linejoin="round"><path d="M11.500 6.500 H1.500 M6 2 L1.500 6.500 L6 11"/></svg>

<span class="t" style="left:60.70px;top:28.8px;font-size:17px;line-height:24px;font-weight:700;color:#ffffff;transform:scaleX(0.9458);">Collaborate Pros</span>
<span class="t" style="left:265.41px;top:30.2px;font-size:14.5px;line-height:20px;font-weight:700;color:#ffffff;transform:scaleX(0.9798);">Projects</span>
<span class="t" style="left:373.46px;top:30.2px;font-size:14.5px;line-height:20px;font-weight:700;color:#ffffff;transform:scaleX(0.9672);">Competitive Research</span>
<span class="t" style="left:572.34px;top:30.2px;font-size:14.5px;line-height:20px;font-weight:700;color:#ffffff;transform:scaleX(0.9492);">Keyword Research</span>
<span class="t" style="left:748.54px;top:30.2px;font-size:14.5px;line-height:20px;font-weight:700;color:#ffffff;transform:scaleX(1.0127);">Content Marketing</span>
<span class="t" style="left:945.54px;top:30.2px;font-size:14.5px;line-height:20px;font-weight:700;color:#ffffff;transform:scaleX(0.9500);">Backlinks</span>
<span class="t" style="left:1078.12px;top:30.2px;font-size:14.5px;line-height:20px;font-weight:700;color:#ffffff;transform:scaleX(0.9740);">Report Builder</span>
<span class="t" style="left:1228.65px;top:30.2px;font-size:14.5px;line-height:20px;font-weight:700;color:#ffffff;transform:scaleX(1.0517);">More</span>
<span class="t" style="left:1550.30px;top:31.6px;font-size:12.5px;line-height:18px;font-weight:400;color:#1b55b0;transform:scaleX(0.9994);">AV</span>
<span class="t" style="left:266.93px;top:85.0px;font-size:15px;line-height:21px;font-weight:400;color:#5b6577;transform:scaleX(1.0337);">https://www.denislifeinsurance.com/</span>
<span class="t" style="left:546.40px;top:85.0px;font-size:15px;line-height:21px;font-weight:400;color:#5b6577;transform:scaleX(1.0063);">Website Audit</span>
<span class="t" style="left:671.79px;top:85.0px;font-size:15px;line-height:21px;font-weight:400;color:#9aa1ae;transform:scaleX(1.0114);">Overview</span>
<span class="t" style="left:1055.11px;top:85.0px;font-size:15px;line-height:21px;font-weight:400;color:#3d7fd6;transform:scaleX(0.9875);">Guest link</span>
<span class="t" style="left:1145.96px;top:85.0px;font-size:15px;line-height:21px;font-weight:400;color:#3d7fd6;transform:scaleX(0.9763);">Feedback</span>
<span class="t" style="left:1234.78px;top:85.0px;font-size:15px;line-height:21px;font-weight:400;color:#3d7fd6;transform:scaleX(1.0385);">Notes (29)</span>
<span class="t" style="left:1361.20px;top:86.8px;font-size:12.5px;line-height:18px;font-weight:400;color:#3a3f4c;transform:scaleX(1.0652);">Account limit</span>
<span class="t" style="left:1442.36px;top:86.8px;font-size:13px;line-height:18px;font-weight:400;color:#1b1b29;transform:scaleX(1.0373);-webkit-text-stroke:0.15px #1b1b29;">18,204 / 4,500,000</span>
<span class="t" style="left:1558.00px;top:83.0px;font-size:11px;line-height:15px;font-weight:400;color:#4a5060;transform:scaleX(1.0000);font-style:italic;">i</span>
<span class="t" style="left:267.56px;top:135.3px;font-size:21px;line-height:29px;font-weight:700;color:#1b1b29;transform:scaleX(0.9805);">Overview</span>
<span class="t" style="left:365.40px;top:135.3px;font-size:21px;line-height:29px;font-weight:400;color:#6a7384;transform:scaleX(1.0486);">/ https://www.denislifeinsurance.com</span>
<span class="t" style="left:1431.87px;top:141.0px;font-size:12.5px;line-height:18px;font-weight:400;color:#7a8496;transform:scaleX(1.0270);">Last update</span>
<span class="t" style="left:1500.87px;top:141.0px;font-size:12.5px;line-height:18px;font-weight:400;color:#1b1b29;transform:scaleX(1.0311);-webkit-text-stroke:0.15px #1b1b29;">Feb-22 2024</span>
<span class="t" style="left:267.46px;top:185.4px;font-size:15px;line-height:21px;font-weight:400;color:#4c5567;transform:scaleX(1.0515);">Current report:</span>
<span class="t" style="left:511.98px;top:185.4px;font-size:15px;line-height:21px;font-weight:400;color:#4c5567;transform:scaleX(1.0201);">Compare to:</span>
<span class="t" style="left:315.27px;top:215.7px;font-size:15px;line-height:21px;font-weight:400;color:#1b1b29;transform:scaleX(0.9639);">Feb-22 2024 12:18:54</span>
<span class="t" style="left:497.00px;top:218.0px;font-size:13px;line-height:18px;font-weight:400;color:#3a3f4c;transform:scaleX(1.0000);font-style:italic;">/</span>
<span class="t" style="left:554.44px;top:215.7px;font-size:15px;line-height:21px;font-weight:400;color:#1b1b29;transform:scaleX(0.9885);">Feb-22 2024 12:04:54</span>
<span class="t" style="left:795.69px;top:217.2px;font-size:13px;line-height:18px;font-weight:400;color:#4a5060;transform:scaleX(1.0975);">Next audit:</span>
<span class="t" style="left:866.89px;top:217.2px;font-size:13px;line-height:18px;font-weight:400;color:#1b1b29;transform:scaleX(1.0951);">Mar-01 2024 0:00:00</span>
<span class="t" style="left:1127.56px;top:219.9px;font-size:12px;line-height:17px;font-weight:700;color:#ffffff;transform:scaleX(0.9295);">RESTART AUDIT</span>
<span class="t" style="left:1273.48px;top:219.9px;font-size:12px;line-height:17px;font-weight:400;color:#1b1b29;transform:scaleX(0.9673);">DOWNLOAD REPORT</span>
<span class="t" style="left:1451.93px;top:219.9px;font-size:12px;line-height:17px;font-weight:400;color:#1b1b29;transform:scaleX(0.9457);">SETTINGS</span>
<span class="t" style="left:288.07px;top:308.1px;font-size:11.3px;line-height:16px;font-weight:400;color:#24252f;transform:scaleX(1.0301);-webkit-text-stroke:0.3px #24252f;">PAGES CRAWLED</span>
<span class="t" style="left:395.50px;top:305.0px;font-size:11px;line-height:15px;font-weight:400;color:#4a5060;transform:scaleX(1.0000);font-style:italic;">i</span>
<span class="t" style="left:288.22px;top:343.2px;font-size:22px;line-height:31px;font-weight:400;color:#15151f;transform:scaleX(1.1481);-webkit-text-stroke:0.55px #15151f;">1,000</span>
<span class="t" style="left:291.16px;top:389.4px;font-size:13px;line-height:18px;font-weight:400;color:#6f7787;transform:scaleX(1.0294);">1200</span>
<span class="t" style="left:312.42px;top:452.2px;font-size:13px;line-height:18px;font-weight:400;color:#6f7787;transform:scaleX(1.1846);">0</span>
<span class="t" style="left:288.10px;top:536.0px;font-size:11.3px;line-height:16px;font-weight:400;color:#24252f;transform:scaleX(1.0556);-webkit-text-stroke:0.3px #24252f;">URLS FOUND</span>
<span class="t" style="left:372.50px;top:532.3px;font-size:11px;line-height:15px;font-weight:400;color:#4a5060;transform:scaleX(1.0000);font-style:italic;">i</span>
<span class="t" style="left:288.61px;top:570.4px;font-size:22px;line-height:31px;font-weight:400;color:#15151f;transform:scaleX(0.9580);-webkit-text-stroke:0.55px #15151f;">2,151</span>
<span class="t" style="left:357.90px;top:577.5px;font-size:12.5px;line-height:18px;font-weight:400;color:#e0182d;transform:scaleX(1.0478);">10</span>
<span class="t" style="left:290.98px;top:616.0px;font-size:13px;line-height:18px;font-weight:400;color:#6f7787;transform:scaleX(1.0358);">3200</span>
<span class="t" style="left:312.42px;top:679.0px;font-size:13px;line-height:18px;font-weight:400;color:#6f7787;transform:scaleX(1.1846);">0</span>
<span class="t" style="left:620.07px;top:308.1px;font-size:11.3px;line-height:16px;font-weight:400;color:#24252f;transform:scaleX(1.0381);-webkit-text-stroke:0.3px #24252f;">HEALTH SCORE</span>
<span class="t" style="left:717.80px;top:305.0px;font-size:11px;line-height:15px;font-weight:400;color:#4a5060;transform:scaleX(1.0000);font-style:italic;">i</span>
<span class="t" style="left:756.10px;top:388.8px;font-size:13.5px;line-height:19px;font-weight:400;color:#2a2d3a;transform:scaleX(1.1062);">2</span>
<span class="t" style="left:733.41px;top:411.3px;font-size:35px;line-height:49px;font-weight:400;color:#15151f;transform:scaleX(1.0901);-webkit-text-stroke:0.9px #15151f;">82</span>
<span class="t" style="left:722.49px;top:458.6px;font-size:11px;line-height:15px;font-weight:400;color:#4c5567;transform:scaleX(1.0154);">OUT OF 100</span>
<span class="t" style="left:726.26px;top:506.5px;font-size:12px;line-height:17px;font-weight:700;color:#3dab7c;transform:scaleX(0.9208);letter-spacing:0.8px;">HEALTHY</span>
<span class="t" style="left:667.55px;top:627.9px;font-size:11px;line-height:15px;font-weight:400;color:#8d95a6;transform:scaleX(0.9470);letter-spacing:1px;">BETTER THAN <b style="color:#2a2d3a">84%</b> OF USERS</span>
<span class="t" style="left:951.62px;top:308.1px;font-size:11.3px;line-height:16px;font-weight:400;color:#24252f;transform:scaleX(1.0459);-webkit-text-stroke:0.3px #24252f;">CORE WEB VITALS</span>
<span class="t" style="left:1066.00px;top:305.0px;font-size:11px;line-height:15px;font-weight:400;color:#4a5060;transform:scaleX(1.0000);font-style:italic;">i</span>
<span class="t" style="left:1044.47px;top:648.8px;font-size:15px;line-height:21px;font-weight:400;color:#4a505e;transform:scaleX(0.9859);">There is no data for this website yet. Try restarting the audit in a</span>
<span class="t" style="left:1093.80px;top:669.3px;font-size:15px;line-height:21px;font-weight:400;color:#4a505e;transform:scaleX(0.9891);">few weeks time while the data is being collected.</span>
<span class="t" style="left:37.78px;top:91.0px;font-size:15px;line-height:21px;font-weight:700;color:#d3d8e2;transform:scaleX(0.9267);">All Projects</span>
<span class="t" style="left:39.60px;top:139.0px;font-size:15px;line-height:21px;font-weight:400;color:#33425d;transform:scaleX(1.0647);">https://www.denislifei...</span>
<span class="t" style="left:12.10px;top:220.3px;font-size:11.5px;line-height:16px;font-weight:700;color:#ffffff;transform:scaleX(0.9290);">PROJECTS</span>
<span class="t" style="left:40.15px;top:258.9px;font-size:15px;line-height:21px;font-weight:700;color:#d3d8e2;transform:scaleX(0.9065);">Rankings</span>
<span class="t" style="left:40.18px;top:298.2px;font-size:15px;line-height:21px;font-weight:700;color:#d3d8e2;transform:scaleX(0.9388);">Analytics &amp; Traffic</span>
<span class="t" style="left:40.29px;top:339.1px;font-size:15px;line-height:21px;font-weight:700;color:#d3d8e2;transform:scaleX(0.9669);">My Competitors</span>
<span class="t" style="left:40.34px;top:380.6px;font-size:15px;line-height:21px;font-weight:700;color:#d3d8e2;transform:scaleX(0.9150);">Insights</span>
<span class="t" style="left:188.86px;top:382.6px;font-size:11.5px;line-height:16px;font-weight:700;color:#2fa564;transform:scaleX(0.9613);font-family:'Liberation Serif',serif;">Beta</span>
<span class="t" style="left:40.10px;top:422.8px;font-size:15px;line-height:21px;font-weight:700;color:#d3d8e2;transform:scaleX(0.9550);">Marketing Plan</span>
<span class="t" style="left:40.40px;top:462.3px;font-size:15px;line-height:21px;font-weight:700;color:#ffffff;transform:scaleX(0.9413);">Website Audit</span>
<span class="t" style="left:37.50px;top:499.2px;font-size:12.5px;line-height:18px;font-weight:700;color:#ffffff;transform:scaleX(0.9942);">Overview</span>
<span class="t" style="left:38.15px;top:528.4px;font-size:12.5px;line-height:18px;font-weight:700;color:#e3e6ee;transform:scaleX(0.9358);">Issue Report</span>
<span class="t" style="left:37.53px;top:557.9px;font-size:12.5px;line-height:18px;font-weight:700;color:#e3e6ee;transform:scaleX(0.9462);">Crawled Pages</span>
<span class="t" style="left:38.16px;top:587.4px;font-size:12.5px;line-height:18px;font-weight:700;color:#e3e6ee;transform:scaleX(0.9207);">Found Resources</span>
<span class="t" style="left:38.07px;top:642.5px;font-size:15px;line-height:21px;font-weight:400;color:#58bf78;transform:scaleX(0.9787);">Try New Menu UI</span>
<span class="t" style="left:40.08px;top:698.5px;font-size:15.5px;line-height:22px;font-weight:700;color:#d3d8e2;transform:scaleX(0.9501);">Minimize</span>
</body></html>
